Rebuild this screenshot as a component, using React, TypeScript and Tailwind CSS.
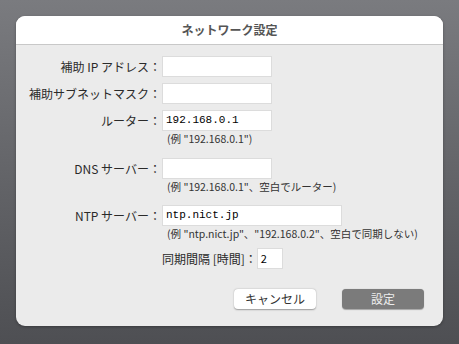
const jp = "font-['Noto_Sans_CJK_JP','Noto_Sans',sans-serif]";

const Field = ({ label, value, width, hint }: { label: string; value?: string; width: string; hint?: string }) => (
  <div className="flex flex-col">
    <div className="flex items-center">
      <div className="w-[146px] shrink-0 pr-[1px] text-right text-[12px] leading-[20px] text-[#2a2a2a]">{label}</div>
      <div className={`${width} h-[21px] border border-[#dcdcdc] bg-white pl-[3px] font-['Liberation_Mono',monospace] text-[11px] leading-[19px] text-black`}>
        {value}
      </div>
    </div>
    {hint && <div className="ml-[151px] mt-[1px] text-[10.5px] leading-[13px] text-[#333]">{hint}</div>}
  </div>
);

export default function App() {
  return (
    <div className={`h-[344px] w-[459px] bg-gradient-to-b from-[#7a7b7f] to-[#4e4f53] p-[16px] pb-[18px] ${jp}`}>
      <div className="flex h-[310px] w-[427px] flex-col overflow-hidden rounded-[9px] bg-[#ebebeb] shadow-[0_1px_3px_rgba(0,0,0,0.3)]">
        <div className="flex h-[29px] items-center justify-center border-b border-[#c8c8c8] bg-white text-[12px] font-bold text-[#555]">
          ネットワーク設定
        </div>
        <div className="flex flex-col pt-[11px]">
          <Field label="補助 IP アドレス：" width="w-[110px]" />
          <div className="mt-[6px]">
            <Field label="補助サブネットマスク：" width="w-[110px]" />
          </div>
          <div className="mt-[6px]">
            <Field label="ルーター：" value="192.168.0.1" width="w-[110px]" hint={'(例 "192.168.0.1")'} />
          </div>
          <div className="mt-[13px]">
            <Field label="DNS サーバー：" width="w-[110px]" hint={'(例 "192.168.0.1"、空白でルーター)'} />
          </div>
          <div className="mt-[12px]">
            <Field label="NTP サーバー：" value="ntp.nict.jp" width="w-[180px]" hint={'(例 "ntp.nict.jp"、"192.168.0.2"、空白で同期しない)'} />
          </div>
          <div className="ml-[146px] mt-[8px] flex items-center">
            <span className="text-[12px] leading-[20px] text-[#2a2a2a]">同期間隔 [時間]：</span>
            <div className="h-[21px] w-[26px] border border-[#dcdcdc] bg-white pl-[3px] text-[11px] leading-[19px] text-black">2</div>
          </div>
          <div className="mt-[20px] flex">
            <button className="ml-[218px] h-[20px] w-[82px] rounded-[4px] bg-white text-[12px] leading-[20px] text-[#333] shadow-[0_0.5px_1.5px_rgba(0,0,0,0.35)]">
              キャンセル
            </button>
            <button className="ml-[26px] h-[20px] w-[82px] rounded-[4px] bg-[#7b7b7b] text-[12px] leading-[20px] text-[#eeeeee] shadow-[0_0.5px_1px_rgba(0,0,0,0.3)]">
              設定
            </button>
          </div>
        </div>
      </div>
    </div>
  );
}
